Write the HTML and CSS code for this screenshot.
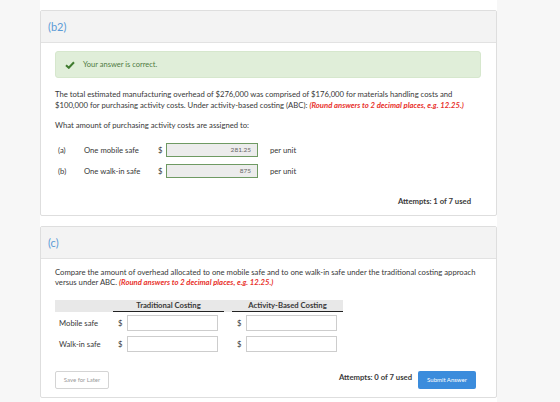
FILE: index.html
```html
<!DOCTYPE html>
<html lang="en">
<head>
    <meta charset="UTF-8">
    <title>Activity-Based Costing</title>
    <link rel="stylesheet" href="styles.css">
</head>
<body>
    <div class="page">
        <section class="card card-b2">
            <div class="card-head">(b2)</div>
            <div class="card-body">
                <div class="notice">
                    <svg class="check" width="10" height="8" viewBox="0 0 10 8">
                        <path d="M1 4.2 L3.8 6.8 L9 1.2" fill="none" stroke="#3f7b2f" stroke-width="2"/>
                    </svg>
                    <span>Your answer is correct.</span>
                </div>

                <p class="question">The total estimated manufacturing overhead of $276,000 was comprised of $176,000 for materials handling costs and $100,000 for purchasing activity costs. Under activity-based costing (ABC): <em class="hint">(Round answers to 2 decimal places, e.g. 12.25.)</em></p>

                <p class="question ask">What amount of purchasing activity costs are assigned to:</p>

                <div class="answers">
                    <div class="answer-row">
                        <span>(a)</span>
                        <span>One mobile safe</span>
                        <span>$</span>
                        <input class="field done" type="text" value="281.25">
                        <span>per unit</span>
                    </div>
                    <div class="answer-row">
                        <span>(b)</span>
                        <span>One walk-in safe</span>
                        <span>$</span>
                        <input class="field done" type="text" value="875">
                        <span>per unit</span>
                    </div>
                </div>

                <div class="attempts">Attempts: 1 of 7 used</div>
            </div>
        </section>

        <section class="card card-c">
            <div class="card-head">(c)</div>
            <div class="card-body">
                <p class="question">Compare the amount of overhead allocated to one mobile safe and to one walk-in safe under the traditional costing approach versus under ABC. <em class="hint">(Round answers to 2 decimal places, e.g. 12.25.)</em></p>

                <div class="compare">
                    <div class="compare-head">
                        <span></span>
                        <span class="col-title">Traditional Costing</span>
                        <span></span>
                        <span class="col-title">Activity-Based Costing</span>
                    </div>
                    <div class="compare-row">
                        <span class="row-label">Mobile safe</span>
                        <div class="cell"><span>$</span><input class="field" type="text"></div>
                        <span></span>
                        <div class="cell"><span>$</span><input class="field" type="text"></div>
                    </div>
                    <div class="compare-row">
                        <span class="row-label">Walk-in safe</span>
                        <div class="cell"><span>$</span><input class="field" type="text"></div>
                        <span></span>
                        <div class="cell"><span>$</span><input class="field" type="text"></div>
                    </div>
                </div>

                <div class="actions">
                    <button class="btn-save">Save for Later</button>
                    <div class="submit-group">
                        <span class="attempts-inline">Attempts: 0 of 7 used</span>
                        <button class="btn-submit">Submit Answer</button>
                    </div>
                </div>
            </div>
        </section>
    </div>
</body>
</html>
```

FILE: styles.css
```css
* {
    box-sizing: border-box;
    margin: 0;
    padding: 0;
    font-family: Lato, 'Liberation Sans', sans-serif;
}
body {
    background: #f7f7f7;
    color: #383838;
    font-size: 7.7px;
}
.page {
    width: 457px;
    margin-left: 40px;
    background: white;
    padding: 10px 0 5px;
    min-height: 402px;
}
.card {
    border: 1px solid #dedede;
    border-radius: 2px;
    background: white;
}
.card-c {
    margin-top: 10px;
}
.card-head {
    height: 32px;
    background: #f3f3f3;
    border-bottom: 1px solid #e2e2e2;
    padding: 9px 7px 0;
    color: #5a9ad6;
    font-size: 11px;
    line-height: 14px;
}
.card-body {
    padding: 8px 15px 9px 14px;
}
.card-c .card-body {
    padding: 8px 20px 8px 14px;
}
.notice {
    height: 27px;
    background: #e0eed9;
    border: 1px solid #d6e7cd;
    border-radius: 3px;
    display: flex;
    align-items: center;
    padding-left: 9px;
    gap: 8px;
    color: #4e7a42;
    font-size: 7.5px;
}
.question {
    margin-top: 11px;
    line-height: 10.5px;
    padding-right: 10px;
}
.card-c .question {
    margin-top: 0;
    padding-right: 0;
}
.ask {
    margin-top: 10px;
}
.hint {
    color: #e8312b;
    font-weight: 700;
}
.answers {
    margin-top: 12px;
    display: flex;
    flex-direction: column;
    gap: 7px;
}
.answer-row {
    display: grid;
    grid-template-columns: 26px 74px 8px 92px auto;
    align-items: center;
    padding-left: 3px;
    height: 14px;
}
.answer-row span:last-child {
    margin-left: 12px;
}
.field {
    height: 14px;
    width: 92px;
    border: 1px solid #c9c9c9;
    background: white;
    font-size: 6.5px;
    color: #666;
    text-align: right;
    padding-right: 6px;
}
.done {
    background: #ececec;
    border-color: #6f9a63;
}
.attempts {
    text-align: right;
    margin-top: 18px;
    margin-right: 10px;
    font-weight: 700;
    color: #3a3a3a;
    line-height: 10px;
}
.compare {
    margin-top: 12px;
    width: 288px;
}
.compare-head,
.compare-row {
    display: grid;
    grid-template-columns: 58px 111px 8px 111px;
    align-items: center;
}
.compare-head {
    background: #e8e8e8;
    height: 12px;
}
.col-title {
    text-align: center;
    font-weight: 700;
    height: 12px;
    line-height: 11px;
    border-bottom: 1px solid #222;
}
.compare-row {
    margin-top: 3px;
    height: 17px;
}
.compare-row + .compare-row {
    margin-top: 4px;
}
.row-label {
    padding-left: 4px;
}
.cell {
    display: flex;
    align-items: center;
    padding-left: 5px;
    gap: 5px;
}
.cell .field {
    height: 16px;
    width: 91px;
    border: 1px solid #cdcdcd;
}
.actions {
    margin-top: 18px;
    display: flex;
    justify-content: space-between;
    align-items: center;
}
.btn-save {
    width: 54px;
    height: 18px;
    background: white;
    border: 1px solid #d4d4d4;
    border-radius: 2px;
    color: #9a9a9a;
    font-size: 6px;
}
.submit-group {
    display: flex;
    align-items: center;
    gap: 6px;
}
.attempts-inline {
    font-weight: 700;
    color: #3a3a3a;
    margin-top: -6px;
}
.btn-submit {
    width: 58px;
    height: 18px;
    background: #3b8cdc;
    border: none;
    border-radius: 2px;
    color: white;
    font-size: 6px;
}
```
